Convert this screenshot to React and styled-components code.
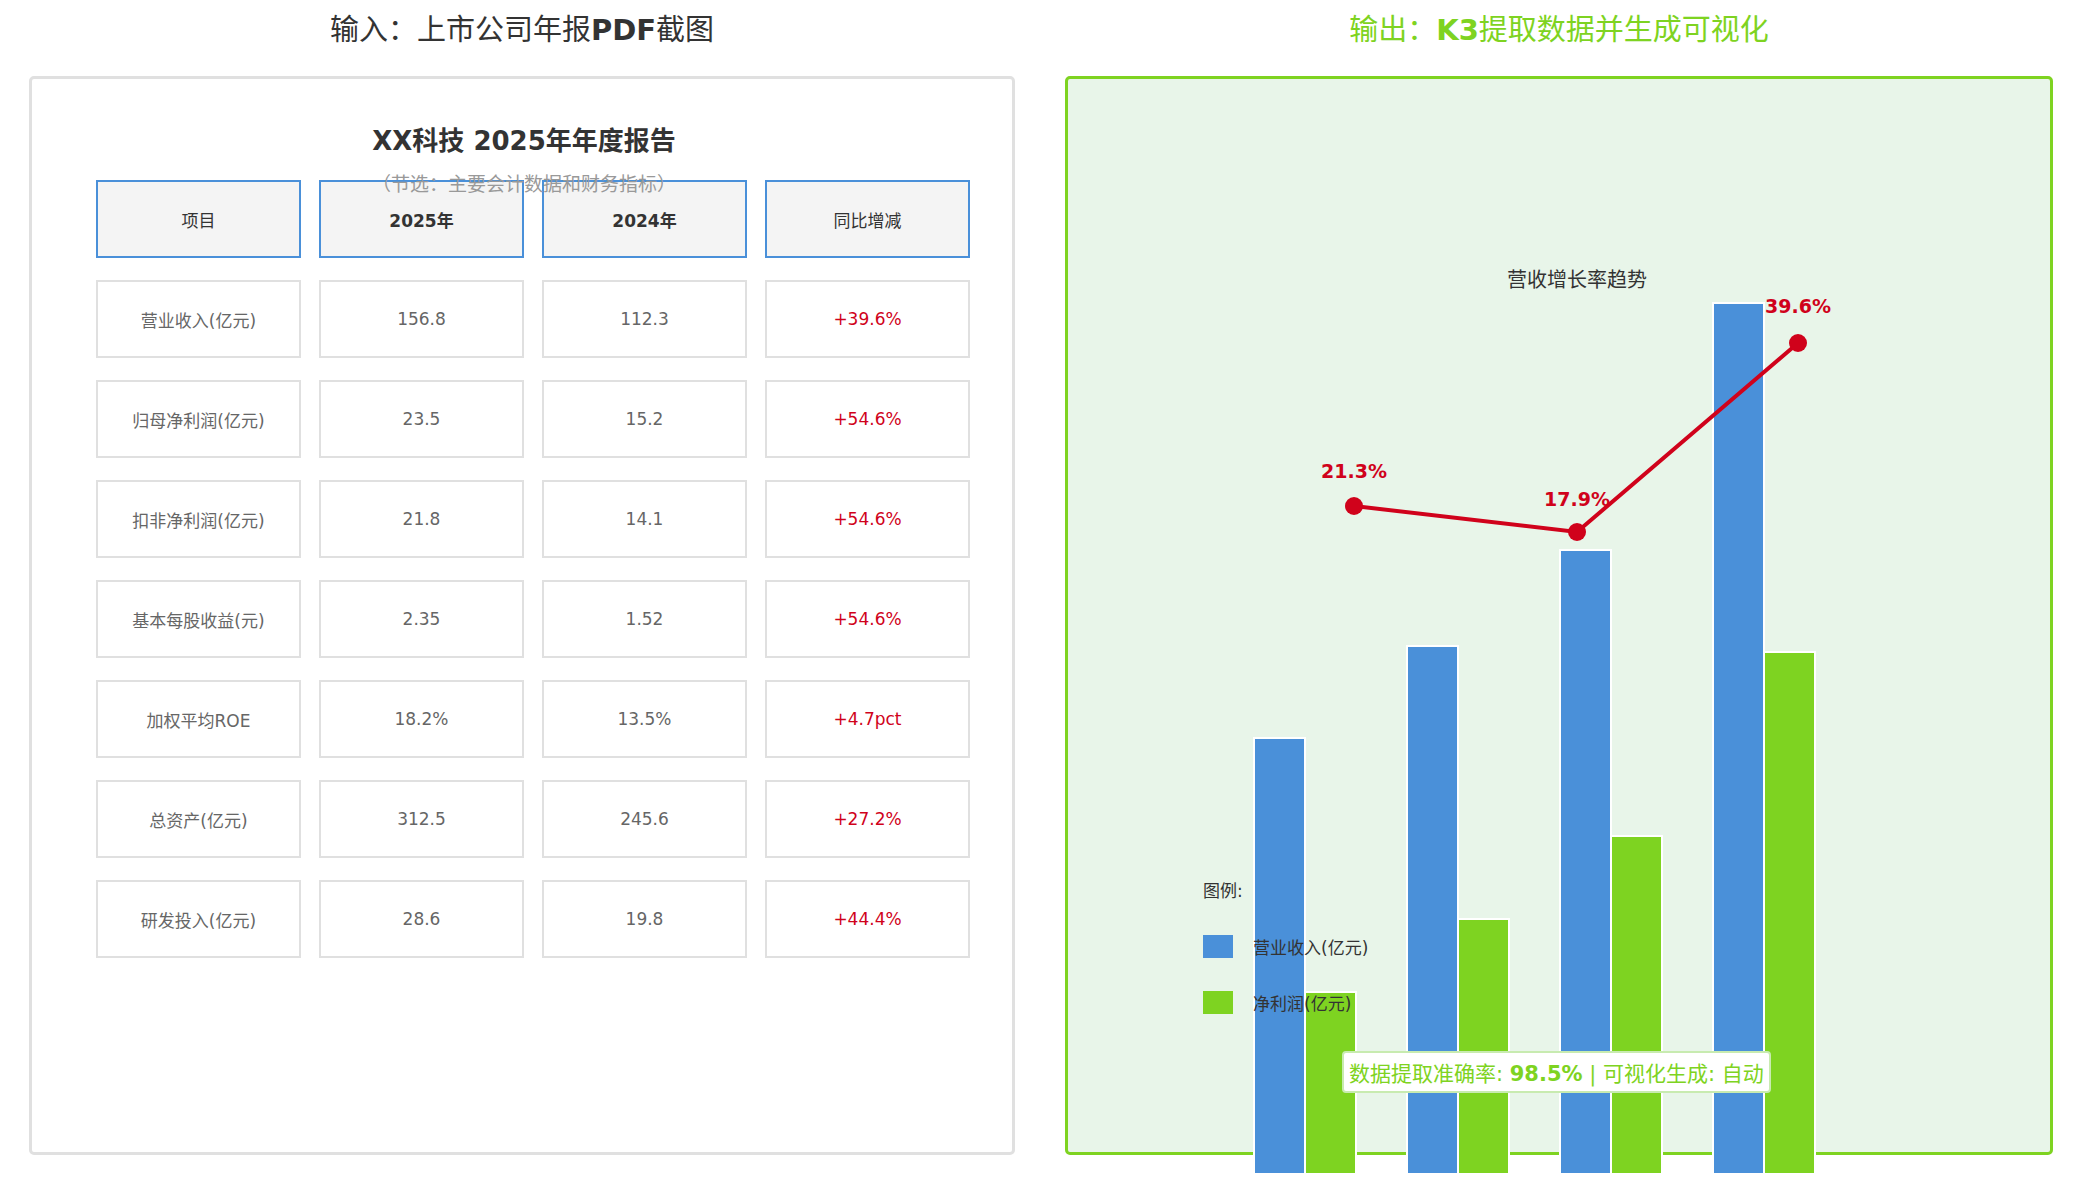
import React from 'react'
import styled, { createGlobalStyle } from 'styled-components'

const Global = createGlobalStyle`
  body { margin: 0; background: #fff; font-family: "DejaVu Sans", "Noto Sans CJK SC", sans-serif; }
`

const Page = styled.div`
  width: 2080px;
  height: 1180px;
  display: grid;
  grid-template-columns: 986px 988px;
  column-gap: 50px;
  padding-left: 29px;
  box-sizing: border-box;
  overflow: hidden;
`

const Column = styled.div`
  display: flex;
  flex-direction: column;
`

const Heading = styled.div`
  height: 76px;
  line-height: 60px;
  text-align: center;
  font-size: 29px;
  color: ${p => p.green ? '#7ed321' : '#333'};
  b { font-weight: bold; }
`

const Panel = styled.div`
  position: relative;
  height: 1079px;
  box-sizing: border-box;
  border: 3px solid ${p => p.green ? '#7ed321' : '#e0e0e0'};
  border-radius: 5px;
  background: ${p => p.green ? '#e8f5e9' : '#fff'};
`

const Report = styled.div`
  padding: 44px 40px 0 64px;
  display: flex;
  flex-direction: column;
`

const ReportTitle = styled.div`
  text-align: center;
  font-size: 26px;
  font-weight: bold;
  color: #333;
  line-height: 36px;
  margin-left: -20px;
`

const Sub = styled.div`
  text-align: center;
  font-size: 19px;
  color: #999;
  line-height: 26px;
  margin: 12px 0 -17px -20px;
  position: relative;
  z-index: 1;
`

const Table = styled.div`
  display: grid;
  grid-template-columns: repeat(4, 205px);
  column-gap: 18px;
  row-gap: 22px;
`

const HeadCell = styled.div`
  height: 78px;
  box-sizing: border-box;
  border: 2px solid #4a90d9;
  background: #f4f4f4;
  display: flex;
  align-items: center;
  justify-content: center;
  font-size: 17px;
  color: #333;
  font-weight: ${p => p.bold ? 'bold' : 'normal'};
`

const Cell = styled.div`
  height: 78px;
  box-sizing: border-box;
  border: 2px solid #e0e0e0;
  background: #fff;
  display: flex;
  align-items: center;
  justify-content: center;
  font-size: 17px;
  color: ${p => p.red ? '#d0021b' : '#666'};
`

const Chart = styled.svg`
  position: absolute;
  left: 0;
  top: 0;
  overflow: visible;
`

const Legend = styled.div`
  position: absolute;
  left: 135px;
  top: 798px;
  font-size: 17px;
  color: #333;
`

const LegendTitle = styled.div`
  margin-bottom: 33px;
`

const LegendRow = styled.div`
  display: flex;
  align-items: center;
  gap: 20px;
  height: 23px;
  margin-bottom: 33px;
  &::before {
    content: '';
    width: 30px;
    height: 23px;
    background: ${p => p.color};
  }
`

const Badge = styled.div`
  position: absolute;
  left: 274px;
  top: 972px;
  background: #fff;
  border: 2px solid #c8ebb0;
  border-radius: 4px;
  padding: 4px 5px;
  font-size: 21px;
  color: #7ed321;
  white-space: nowrap;
  z-index: 2;
`

const rows = [
  ['营业收入(亿元)', '156.8', '112.3', '+39.6%'],
  ['归母净利润(亿元)', '23.5', '15.2', '+54.6%'],
  ['扣非净利润(亿元)', '21.8', '14.1', '+54.6%'],
  ['基本每股收益(元)', '2.35', '1.52', '+54.6%'],
  ['加权平均ROE', '18.2%', '13.5%', '+4.7pct'],
  ['总资产(亿元)', '312.5', '245.6', '+27.2%'],
  ['研发投入(亿元)', '28.6', '19.8', '+44.4%'],
]

// bar tops in panel coordinates, bottom runs past the frame
const bars = [
  { x: 186, blue: 659, green: 913 },
  { x: 339, blue: 567, green: 840 },
  { x: 492, blue: 471, green: 757 },
  { x: 645, blue: 224, green: 573 },
]
const BOTTOM = 1095
const pts = [
  { x: 286, y: 427, label: '21.3%', ly: -28 },
  { x: 509, y: 453, label: '17.9%', ly: -26 },
  { x: 730, y: 264, label: '39.6%', ly: -30 },
]

export default function App() {
  return (
    <Page>
      <Global />
      <Column>
        <Heading>输入：上市公司年报<b>PDF</b>截图</Heading>
        <Panel>
          <Report>
            <ReportTitle>XX科技 2025年年度报告</ReportTitle>
            <Sub>（节选：主要会计数据和财务指标）</Sub>
            <Table>
              <HeadCell>项目</HeadCell>
              <HeadCell bold>2025年</HeadCell>
              <HeadCell bold>2024年</HeadCell>
              <HeadCell>同比增减</HeadCell>
              {rows.map(r => (
                <React.Fragment key={r[0]}>
                  <Cell>{r[0]}</Cell>
                  <Cell>{r[1]}</Cell>
                  <Cell>{r[2]}</Cell>
                  <Cell red>{r[3]}</Cell>
                </React.Fragment>
              ))}
            </Table>
          </Report>
        </Panel>
      </Column>
      <Column>
        <Heading green>输出：<b>K3</b>提取数据并生成可视化</Heading>
        <Panel green>
          <Chart width="988" height="1079">
            <text x="509" y="208" textAnchor="middle" fontSize="20" fill="#333">营收增长率趋势</text>
            {bars.map(b => (
              <g key={b.x} stroke="#fff" strokeWidth="2">
                <rect x={b.x} y={b.blue} width="51" height={BOTTOM - b.blue} fill="#4a90d9" />
                <rect x={b.x + 51} y={b.green} width="51" height={BOTTOM - b.green} fill="#7ed321" />
              </g>
            ))}
            <polyline points={pts.map(p => `${p.x},${p.y}`).join(' ')} fill="none" stroke="#d0021b" strokeWidth="4" />
            {pts.map(p => (
              <g key={p.label}>
                <circle cx={p.x} cy={p.y} r="9" fill="#d0021b" />
                <text x={p.x} y={p.y + p.ly} textAnchor="middle" fontSize="19" fontWeight="bold" fill="#d0021b">{p.label}</text>
              </g>
            ))}
          </Chart>
          <Legend>
            <LegendTitle>图例:</LegendTitle>
            <LegendRow color="#4a90d9">营业收入(亿元)</LegendRow>
            <LegendRow color="#7ed321">净利润(亿元)</LegendRow>
          </Legend>
          <Badge>数据提取准确率: <b>98.5%</b> | 可视化生成: 自动</Badge>
        </Panel>
      </Column>
    </Page>
  )
}
